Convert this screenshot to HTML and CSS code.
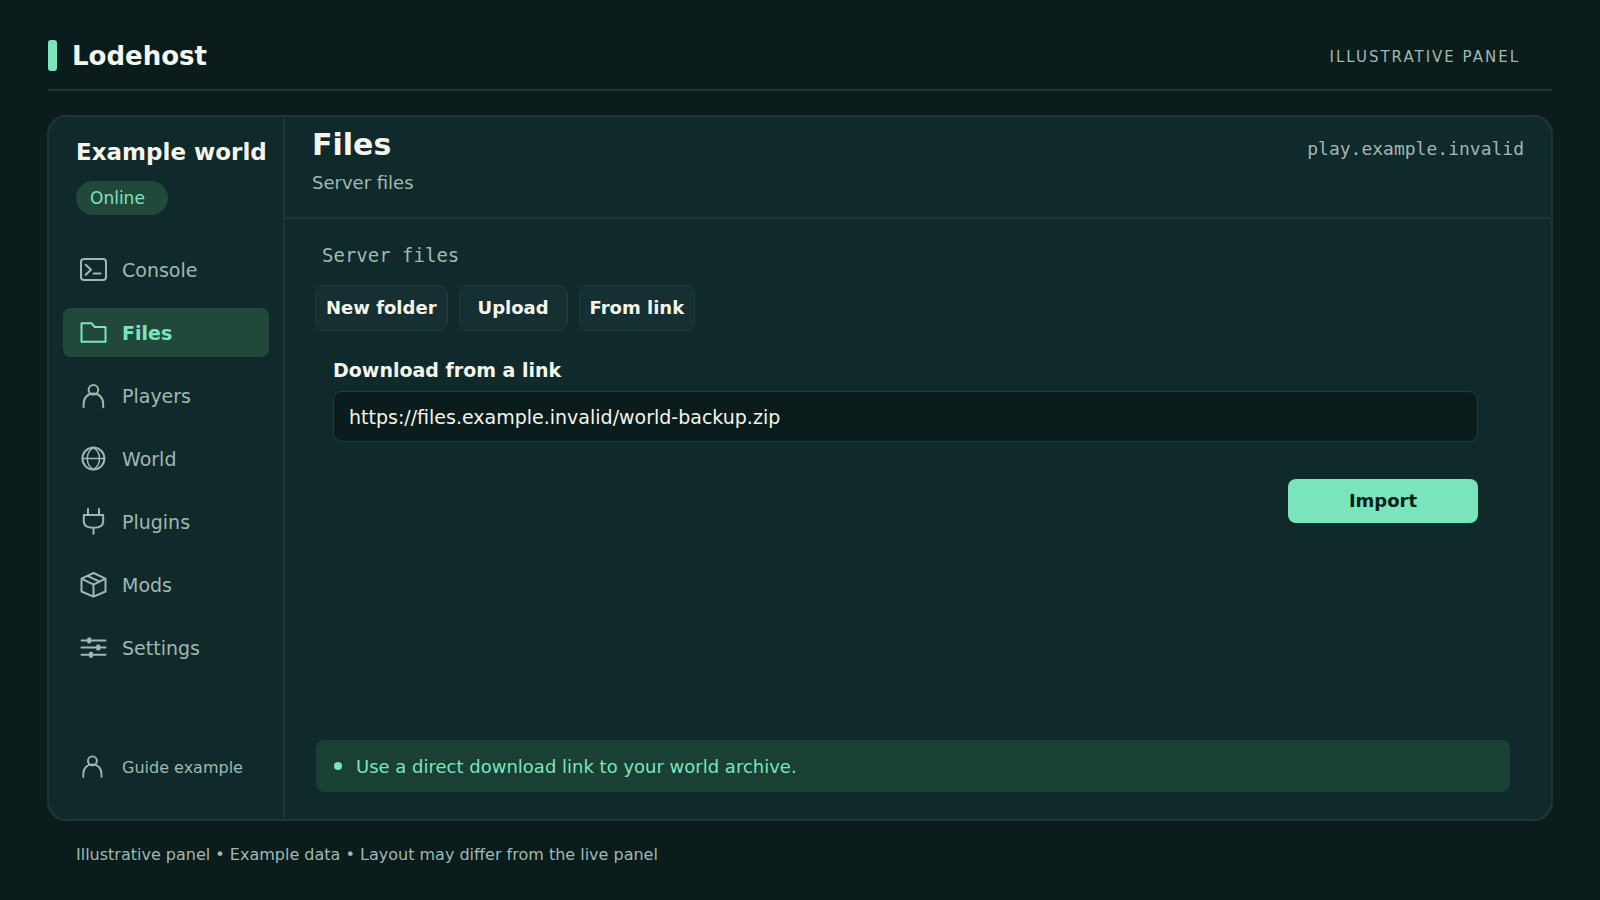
FILE: index.html
```html
<!DOCTYPE html>
<html lang="en">
<head>
<meta charset="utf-8">
<meta name="viewport" content="width=device-width, initial-scale=1">
<title>Lodehost – Files</title>
<link rel="stylesheet" href="styles.css">
</head>
<body>
<div class="page">
  <header class="topbar">
    <div class="brand"><span class="brand-mark"></span>Lodehost</div>
    <div class="topbar-note">ILLUSTRATIVE PANEL</div>
  </header>

  <div class="panel">
    <aside class="sidebar">
      <h2 class="world-name">Example world</h2>
      <span class="status">Online</span>
      <nav class="nav">
        <a class="nav-item" href="#console">
          <svg class="icon" viewBox="0 0 27 27"><rect x="1" y="3" width="25" height="21" rx="3"/><path d="M5.7 8.7l5.300 5-5.300 5M13.700 17.600h6.800"/></svg>
          Console
        </a>
        <a class="nav-item active" href="#files" aria-current="page">
          <svg class="icon" viewBox="0 0 27 27"><path d="M1.500 4.200h10l3.200 3.800h10.800v14.800h-24z"/></svg>
          Files
        </a>
        <a class="nav-item" href="#players">
          <svg class="icon" viewBox="0 0 27 27"><circle cx="13.400" cy="7.800" r="4.800"/><path d="M3.600 25.200v-3.400c0-6 4-10.200 9.800-10.200s9.800 4.200 9.800 10.200v3.400"/></svg>
          Players
        </a>
        <a class="nav-item" href="#world">
          <svg class="icon" viewBox="0 0 27 27"><circle cx="13.400" cy="13.600" r="11"/><path class="thin" d="M2.400 13.600h22M13.400 2.600c-8.200 5-8.200 17 0 22M13.400 2.600c8.200 5 8.200 17 0 22"/></svg>
          World
        </a>
        <a class="nav-item" href="#plugins">
          <svg class="icon" viewBox="0 0 27 27"><path d="M8 1v6M19 1v6M3.800 7h19.400v6.200c0 4.200-3.200 6.600-9.700 6.600s-9.700-2.400-9.700-6.600zM13.500 19.800v6"/></svg>
          Plugins
        </a>
        <a class="nav-item" href="#mods">
          <svg class="icon" viewBox="0 0 27 27"><path d="M13.500 2l12 5.700v12.800l-12 5.200-12-5.200v-12.800zM1.500 7.700l12 5.900 12-5.900M13.500 13.600v12M7.500 4.900l12 5.800"/></svg>
          Mods
        </a>
        <a class="nav-item" href="#settings">
          <svg class="icon" viewBox="0 0 27 27"><path d="M1.500 6.400h24M1.500 13.600h24M1.500 20.800h24"/><g class="solid"><rect x="7.200" y="3.400" width="4" height="6" rx="1.400"/><rect x="16.300" y="10.600" width="4" height="6" rx="1.400"/><rect x="9" y="17.800" width="4" height="6" rx="1.400"/></g></svg>
          Settings
        </a>
      </nav>
      <a class="account" href="#account">
        <svg class="icon" viewBox="0 0 27 27"><circle cx="13.400" cy="6.300" r="4.800"/><path d="M3.600 23.700v-3.400c0-6 4-10.200 9.800-10.200s9.800 4.200 9.800 10.200v3.400"/></svg>
        Guide example
      </a>
    </aside>

    <main class="main">
      <header class="main-head">
        <div>
          <h1 class="title">Files</h1>
          <p class="subtitle">Server files</p>
        </div>
        <div class="host">play.example.invalid</div>
      </header>
      <div class="content">
        <div class="crumb">Server files</div>
        <div class="tools">
          <button class="tool" type="button">New folder</button>
          <button class="tool tool-wide" type="button">Upload</button>
          <button class="tool" type="button">From link</button>
        </div>
        <form class="import">
          <label class="import-label" for="link">Download from a link</label>
          <input class="import-input" id="link" type="text" value="https://files.example.invalid/world-backup.zip">
          <button class="import-button" type="button">Import</button>
        </form>
        <p class="notice"><span class="dot"></span>Use a direct download link to your world archive.</p>
      </div>
    </main>
  </div>

  <footer class="footnote">Illustrative panel • Example data • Layout may differ from the live panel</footer>
</div>
</body>
</html>
```

FILE: styles.css
```css
:root {
  --bg: #0b1c1c;
  --panel: #10292a;
  --raised: #162f32;
  --line: #1d3535;
  --text: #f4f5ec;
  --muted: #a0b8b1;
  --mint: #7ae5bc;
  --active: #22483c;
  --notice: #1a3f35;
}

* {
  box-sizing: border-box;
}

body {
  margin: 0;
  background: var(--bg);
  color: var(--text);
  font-family: "DejaVu Sans", sans-serif;
}

h1,
h2,
p {
  margin: 0;
}

a {
  color: inherit;
  text-decoration: none;
}

button,
input {
  font-family: inherit;
}

.page {
  display: flex;
  flex-direction: column;
  min-height: 100vh;
  padding: 40px 47px 33px;
}

.topbar {
  display: flex;
  align-items: center;
  justify-content: space-between;
  margin: 0 1px 24px;
  padding: 0 32px 16px 0;
  border-bottom: 2px solid var(--line);
}

.brand {
  display: flex;
  align-items: flex-start;
  gap: 15px;
  font-size: 26px;
  font-weight: 700;
  line-height: 33px;
}

.brand-mark {
  width: 9px;
  height: 31px;
  border-radius: 3px;
  background: var(--mint);
}

.topbar-note {
  color: var(--muted);
  font-size: 15px;
  letter-spacing: 2px;
}

.panel {
  display: flex;
  flex: 1;
  border: 2px solid var(--line);
  border-radius: 19px;
  background: var(--panel);
  overflow: hidden;
}

.sidebar {
  display: flex;
  flex: none;
  flex-direction: column;
  width: 236px;
  padding: 19px 14px 39px;
  border-right: 2px solid var(--line);
}

.world-name {
  margin-left: 13px;
  font-size: 23px;
  line-height: 32px;
  white-space: nowrap;
}

.status {
  align-self: flex-start;
  margin: 13px 0 30px 13px;
  padding: 0 23px 0 14px;
  border-radius: 17px;
  background: var(--active);
  color: var(--mint);
  font-size: 17px;
  line-height: 34px;
}

.nav {
  display: flex;
  flex-direction: column;
  gap: 14px;
}

.nav-item {
  display: flex;
  align-items: center;
  gap: 15px;
  height: 49px;
  padding-left: 17px;
  border-radius: 8px;
  color: var(--muted);
  font-size: 19px;
}

.nav-item.active {
  background: var(--active);
  color: var(--mint);
  font-weight: 700;
}

.icon {
  flex: none;
  width: 27px;
  height: 27px;
  fill: none;
  stroke: currentColor;
  stroke-width: 2;
  stroke-linecap: round;
  stroke-linejoin: round;
}

.icon .thin {
  stroke-width: 1.5;
}

.icon .solid {
  fill: currentColor;
  stroke: none;
}

.account {
  display: flex;
  align-items: center;
  gap: 17px;
  margin-top: auto;
  padding-left: 17px;
  color: var(--muted);
  font-size: 16px;
}

.account .icon {
  width: 25px;
  height: 25px;
}

.main {
  display: flex;
  flex: 1;
  flex-direction: column;
  min-width: 0;
}

.main-head {
  display: flex;
  justify-content: space-between;
  padding: 10px 27px 22px;
  border-bottom: 2px solid var(--line);
}

.title {
  font-size: 30px;
  line-height: 36px;
}

.subtitle {
  margin-top: 8px;
  color: var(--muted);
  font-size: 18px;
  line-height: 24px;
}

.host {
  padding-top: 10px;
  color: var(--muted);
  font-family: "DejaVu Sans Mono", monospace;
  font-size: 18px;
  line-height: 24px;
}

.content {
  display: flex;
  flex: 1;
  flex-direction: column;
  padding: 24px 41px 27px 30px;
}

.crumb {
  margin-left: 7px;
  color: var(--muted);
  font-family: "DejaVu Sans Mono", monospace;
  font-size: 19px;
  line-height: 24px;
}

.tools {
  display: flex;
  gap: 11px;
  margin-top: 18px;
}

.tool {
  height: 46px;
  padding: 0 10px 1px;
  border: 1px solid #213d3d;
  border-radius: 9px;
  background: var(--raised);
  color: var(--text);
  font-size: 18px;
  font-weight: 700;
}

.tool-wide {
  padding: 0 18px 1px;
}

.import {
  display: flex;
  flex-direction: column;
  margin: 27px 32px 27px 18px;
}

.import-label {
  font-size: 19px;
  font-weight: 700;
  line-height: 24px;
}

.import-input {
  width: 100%;
  height: 51px;
  margin-top: 9px;
  padding: 0 15px;
  border: 1px solid #213d3d;
  border-radius: 9px;
  background: var(--bg);
  color: var(--text);
  font-size: 19px;
}

.import-button {
  align-self: flex-end;
  width: 190px;
  height: 44px;
  margin-top: 37px;
  padding: 0 0 2px;
  border: 0;
  border-radius: 8px;
  background: var(--mint);
  color: #06201b;
  font-size: 18px;
  font-weight: 700;
}

.notice {
  display: flex;
  align-items: center;
  gap: 14px;
  height: 52px;
  margin: auto 0 0 1px;
  padding-left: 18px;
  border-radius: 8px;
  background: var(--notice);
  color: var(--mint);
  font-size: 18px;
}

.dot {
  width: 8px;
  height: 8px;
  border-radius: 50%;
  background: var(--mint);
}

.footnote {
  padding: 22px 29px 0;
  color: var(--muted);
  font-size: 16px;
  line-height: 24px;
}
```
